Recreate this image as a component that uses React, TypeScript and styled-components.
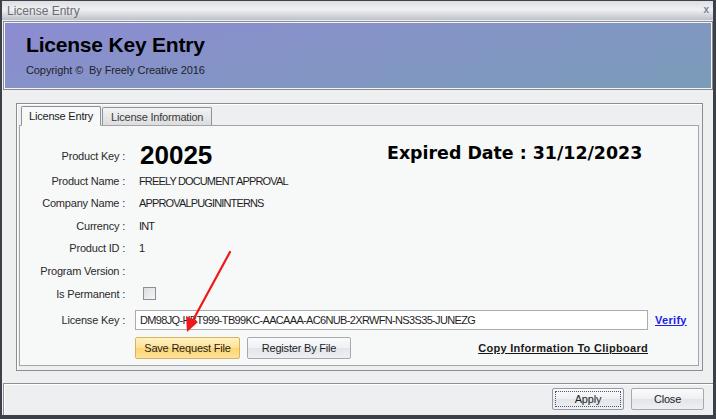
import styled, { createGlobalStyle } from "styled-components";

const GlobalStyle = createGlobalStyle`
  html, body {
    margin: 0;
    padding: 0;
    background: #ffffff;
  }
  body {
    font-family: Tahoma, "Liberation Sans", Arial, sans-serif;
    font-size: 11px;
    color: #1e1e1e;
  }
`;

const Window = styled.div`
  position: relative;
  width: 716px;
  height: 419px;
  box-sizing: border-box;
  border-top: 1px solid #3b4049;
  border-left: 2px solid #3b4049;
  border-right: 3px solid #3b4049;
  border-bottom: 4px solid #3b4049;
  background: #eeeff1;
  display: flex;
  flex-direction: column;
  overflow: hidden;
`;

const TitleBar = styled.div`
  height: 19px;
  flex-shrink: 0;
  display: flex;
  align-items: center;
  justify-content: space-between;
  padding: 0 4px 0 5px;
  background: linear-gradient(#dcdee3 0%, #eef0f3 45%, #d0d3d9 80%, #bcc0c8 100%);
  color: #6b6d72;
  font-size: 12px;
`;

const CloseGlyph = styled.span`
  font-size: 10px;
  font-weight: bold;
  color: #7b8290;
  margin-top: -3px;
`;

const Header = styled.div`
  flex-shrink: 0;
  margin: 1px 0 0 1px;
  height: 69px;
  box-sizing: border-box;
  border: 1px solid #8a8c90;
  box-shadow: inset 0 0 0 1px #f4f5f8;
  background: linear-gradient(170deg, #8d8bd2 0%, #8494c6 45%, #7a9cb8 100%);
  padding: 10px 0 0 22px;
  display: flex;
  flex-direction: column;
`;

const HeaderTitle = styled.div`
  font-size: 21px;
  font-weight: bold;
  color: #000;
  line-height: 26px;
  letter-spacing: -0.2px;
`;

const HeaderSub = styled.div`
  font-size: 11px;
  color: #20222c;
  margin-top: 6px;
  letter-spacing: -0.1px;
`;

const Body = styled.div`
  flex-shrink: 0;
  padding: 13px 11px 0 14px;
  height: 293px;
  box-sizing: border-box;
`;

const GroupFrame = styled.div`
  width: 687px;
  height: 268px;
  box-sizing: border-box;
  border: 1px solid #8c8d90;
  box-shadow: inset 1px 1px 0 #ffffff;
  padding: 1px 3px 4px 2px;
  display: flex;
  flex-direction: column;
`;

const TabStrip = styled.div`
  display: flex;
  align-items: flex-end;
  padding-left: 2px;
  height: 20px;
  position: relative;
  z-index: 1;
`;

const Tab = styled.div<{ $active?: boolean }>`
  box-sizing: border-box;
  height: ${(p) => (p.$active ? "20px" : "18px")};
  padding: 0 ${(p) => (p.$active ? "7px" : "8px")};
  margin-left: ${(p) => (p.$active ? "0" : "1px")};
  display: flex;
  align-items: center;
  font-size: 11px;
  color: ${(p) => (p.$active ? "#1a1a1a" : "#3a3a3a")};
  border: 1px solid #8f9296;
  border-bottom: ${(p) => (p.$active ? "1px solid #f7f8f8" : "none")};
  border-radius: 2px 2px 0 0;
  background: ${(p) =>
    p.$active ? "#f7f8f8" : "linear-gradient(#f2f2f3, #dcdddf)"};
  margin-bottom: ${(p) => (p.$active ? "-1px" : "0")};
  letter-spacing: -0.2px;
`;

const Panel = styled.div`
  flex: 1;
  box-sizing: border-box;
  border: 1px solid #a3a5a8;
  background: #f7f8f8;
  padding-top: 14px;
  display: flex;
  flex-direction: column;
`;

const Row = styled.div<{ $h: number }>`
  height: ${(p) => p.$h}px;
  display: grid;
  grid-template-columns: 105px 1fr;
  column-gap: 10px;
  align-items: center;
`;

const Label = styled.div`
  text-align: right;
  color: #2a2a2a;
  white-space: nowrap;
  letter-spacing: -0.2px;
`;

const Value = styled.div`
  padding-left: 4px;
  color: #1e1e1e;
  white-space: nowrap;
  letter-spacing: -0.85px;
`;

const KeyLine = styled.div`
  display: flex;
  align-items: center;
`;

const BigKey = styled.div`
  font-size: 26px;
  font-weight: bold;
  color: #000;
  padding-left: 5px;
  width: 247px;
`;

const Expired = styled.div`
  font-family: "DejaVu Sans", Verdana, sans-serif;
  font-size: 17.4px;
  font-weight: bold;
  color: #000;
  margin-top: -5px;
`;

const CheckBox = styled.span`
  display: inline-block;
  width: 11px;
  height: 11px;
  margin-left: 4px;
  border: 1px solid #8d8f93;
  background: linear-gradient(135deg, #dcdde0, #f6f6f7);
  vertical-align: middle;
`;

const KeyEntry = styled.div`
  display: flex;
  align-items: center;
  gap: 7px;
`;

const KeyInput = styled.div`
  width: 513px;
  height: 20px;
  box-sizing: border-box;
  border: 1px solid #a9abae;
  background: #fff;
  display: flex;
  align-items: center;
  padding-left: 4px;
  letter-spacing: -0.66px;
`;

const LinkText = styled.span<{ $blue?: boolean }>`
  font-weight: bold;
  text-decoration: underline;
  letter-spacing: 0.3px;
  color: ${(p) => (p.$blue ? "#1c22e8" : "#1a1a1a")};
`;

const ActionRow = styled.div`
  display: flex;
  align-items: center;
  margin-left: 115px;
  width: 513px;
  gap: 7px;
  margin-top: 3px;
`;

const Button = styled.div<{ $tone?: "yellow" | "plain"; $w: number; $focus?: boolean }>`
  position: relative;
  width: ${(p) => p.$w}px;
  height: 22px;
  box-sizing: border-box;
  display: flex;
  align-items: center;
  justify-content: center;
  border-radius: 2px;
  font-size: 11px;
  color: #1e1e1e;
  letter-spacing: -0.2px;
  border: 1px solid ${(p) => (p.$tone === "yellow" ? "#d7b35c" : p.$focus ? "#8e9bb0" : "#a6a9ae")};
  background: ${(p) =>
    p.$tone === "yellow"
      ? "linear-gradient(#fff2c6 0%, #ffe195 50%, #ffd46f 52%, #fde19c 100%)"
      : "linear-gradient(#fbfbfc 0%, #eef0f3 50%, #e2e5ea 52%, #eef0f3 100%)"};
  ${(p) =>
    p.$focus &&
    `&::after {
      content: "";
      position: absolute;
      inset: 2px;
      border: 1px dotted #555;
    }`}
`;

const Spacer = styled.div`
  flex: 1;
`;

const Footer = styled.div`
  flex: 1;
  margin-left: 1px;
  border-top: 1px solid #8d8f93;
  border-left: 1px solid #8d8f93;
  box-shadow: inset 1px 1px 0 #ffffff;
  display: flex;
  justify-content: flex-end;
  align-items: flex-start;
  gap: 7px;
  padding: 4px 9px 0 0;
`;

const ArrowLayer = styled.svg`
  position: absolute;
  left: -2px;
  top: -1px;
  pointer-events: none;
`;

export default function App() {
  return (
    <>
      <GlobalStyle />
      <Window>
        <TitleBar>
          <span>License Entry</span>
          <CloseGlyph>x</CloseGlyph>
        </TitleBar>
        <Header>
          <HeaderTitle>License Key Entry</HeaderTitle>
          <HeaderSub>Copyright ©&nbsp; By Freely Creative 2016</HeaderSub>
        </Header>
        <Body>
          <GroupFrame>
            <TabStrip>
              <Tab $active>License Entry</Tab>
              <Tab>License Information</Tab>
            </TabStrip>
            <Panel>
              <Row $h={30}>
                <Label>Product Key :</Label>
                <KeyLine>
                  <BigKey>20025</BigKey>
                  <Expired>Expired Date : 31/12/2023</Expired>
                </KeyLine>
              </Row>
              <Row $h={22}>
                <Label>Product Name :</Label>
                <Value>FREELY DOCUMENT APPROVAL</Value>
              </Row>
              <Row $h={22}>
                <Label>Company Name :</Label>
                <Value>APPROVALPUGININTERNS</Value>
              </Row>
              <Row $h={23}>
                <Label>Currency :</Label>
                <Value>INT</Value>
              </Row>
              <Row $h={22}>
                <Label>Product ID :</Label>
                <Value>1</Value>
              </Row>
              <Row $h={23}>
                <Label>Program Version :</Label>
                <Value></Value>
              </Row>
              <Row $h={23}>
                <Label>Is Permanent :</Label>
                <Value>
                  <CheckBox />
                </Value>
              </Row>
              <Row $h={29}>
                <Label>License Key :</Label>
                <KeyEntry>
                  <KeyInput>DM98JQ-HBT999-TB99KC-AACAAA-AC6NUB-2XRWFN-NS3S35-JUNEZG</KeyInput>
                  <LinkText $blue>Verify</LinkText>
                </KeyEntry>
              </Row>
              <ActionRow>
                <Button $tone="yellow" $w={105}>
                  Save Request File
                </Button>
                <Button $w={104}>Register By File</Button>
                <Spacer />
                <LinkText>Copy Information To Clipboard</LinkText>
              </ActionRow>
            </Panel>
          </GroupFrame>
        </Body>
        <Footer>
          <Button $w={72} $focus>
            Apply
          </Button>
          <Button $w={73}>Close</Button>
        </Footer>
        <ArrowLayer width="716" height="419" viewBox="0 0 716 419">
          <line x1="230" y1="252" x2="192" y2="322" stroke="#f01818" strokeWidth="2.2" strokeLinecap="round" />
          <polygon points="187,332 186,316 198,322" fill="#f01818" />
        </ArrowLayer>
      </Window>
    </>
  );
}
